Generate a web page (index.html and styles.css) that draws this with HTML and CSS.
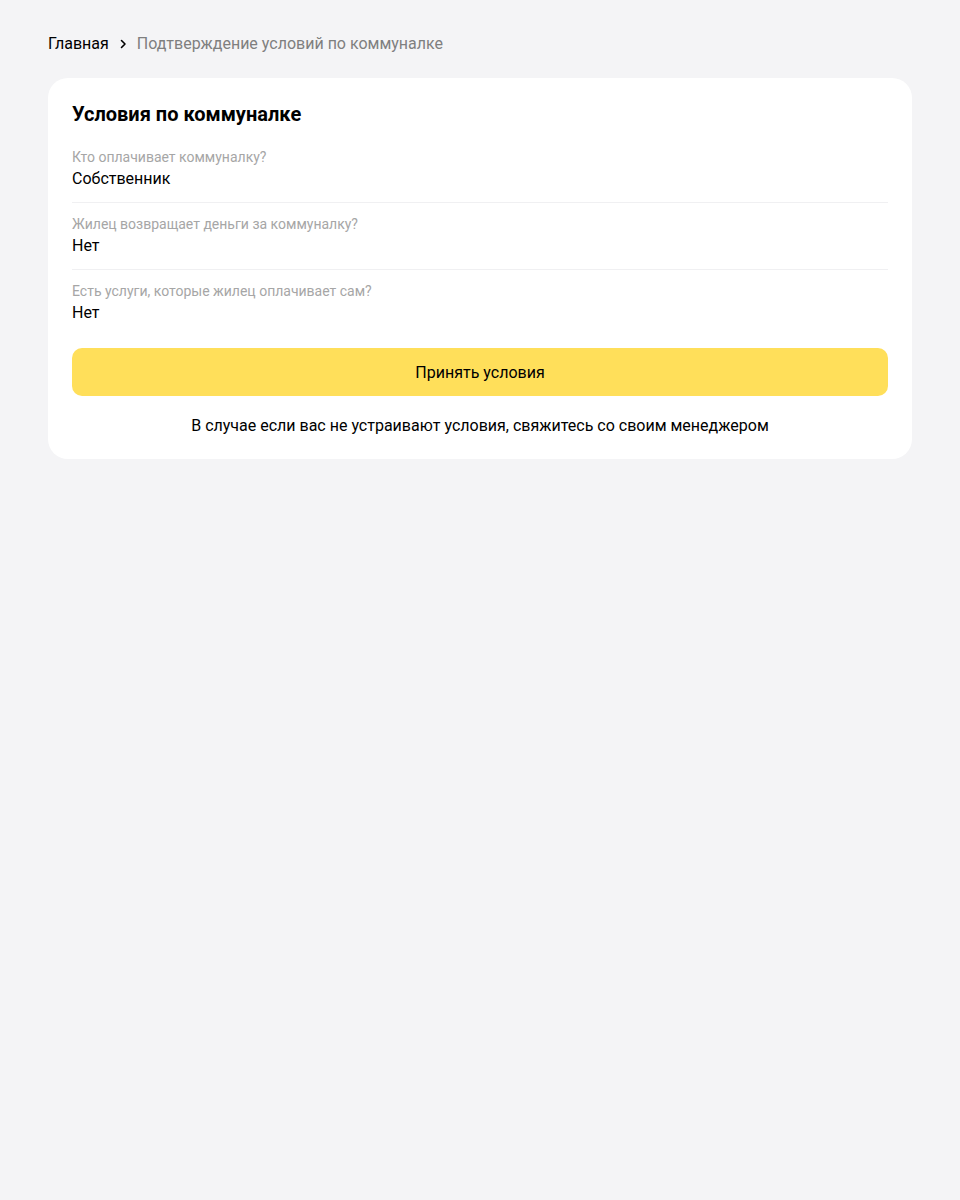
FILE: index.html
```html
<!DOCTYPE html>
<html lang="ru">
<head>
<meta charset="utf-8">
<title>Подтверждение условий по коммуналке</title>
<link rel="stylesheet" href="styles.css">
</head>
<body>
<div class="page">
  <nav class="crumbs">
    <a class="crumb-link" href="#">Главная</a>
    <svg class="crumb-sep" width="16" height="16" viewBox="0 0 16 16" aria-hidden="true"><path d="M6.5 4.5 10 8 6.5 11.5" fill="none" stroke="#000" stroke-width="1.6" stroke-linecap="round" stroke-linejoin="round"/></svg>
    <span class="crumb-current">Подтверждение условий по коммуналке</span>
  </nav>
  <section class="card">
    <h1 class="card-title">Условия по коммуналке</h1>
    <div class="fields">
      <div class="field">
        <div class="field-label">Кто оплачивает коммуналку?</div>
        <div class="field-value">Собственник</div>
      </div>
      <div class="field">
        <div class="field-label">Жилец возвращает деньги за коммуналку?</div>
        <div class="field-value">Нет</div>
      </div>
      <div class="field">
        <div class="field-label">Есть услуги, которые жилец оплачивает сам?</div>
        <div class="field-value">Нет</div>
      </div>
    </div>
    <button class="accept-btn" type="button">Принять условия</button>
    <p class="note">В случае если вас не устраивают условия, свяжитесь со своим менеджером</p>
  </section>
</div>
</body>
</html>
```
FILE: styles.css
```css
* { box-sizing: border-box; }
html, body { margin: 0; padding: 0; }
body {
  background: #f4f4f6;
  font-family: Roboto, "Noto Sans", Arial, sans-serif;
  color: #000;
  min-height: 1200px;
}
.page {
  padding: 33px 48px 32px;
}
.crumbs {
  display: flex;
  align-items: center;
  gap: 6px;
  font-size: 16px;
  line-height: 22px;
  margin-bottom: 23px;
}
.crumb-link { color: #000; text-decoration: none; }
.crumb-sep { display: block; }
.crumb-current { color: #7f7f7f; }
.card {
  background: #fff;
  border-radius: 20px;
  padding: 24px 24px 21px;
  display: flex;
  flex-direction: column;
}
.card-title {
  margin: 0 0 10px;
  font-size: 20px;
  line-height: 24px;
  font-weight: 700;
}
.fields { display: flex; flex-direction: column; }
.field {
  padding: 12px 0;
  border-bottom: 1px solid #f0f0f2;
}
.field:last-child { border-bottom: none; }
.field-label {
  font-size: 14px;
  line-height: 19px;
  color: #a6a6a6;
}
.field-value {
  font-size: 16px;
  line-height: 23px;
}
.accept-btn {
  margin-top: 12px;
  height: 48px;
  border: none;
  border-radius: 10px;
  background: #ffdf5a;
  font-family: inherit;
  font-size: 16px;
  color: #000;
  cursor: pointer;
}
.note {
  margin: 18px 0 0;
  text-align: center;
  font-size: 16px;
  line-height: 24px;
}
```
